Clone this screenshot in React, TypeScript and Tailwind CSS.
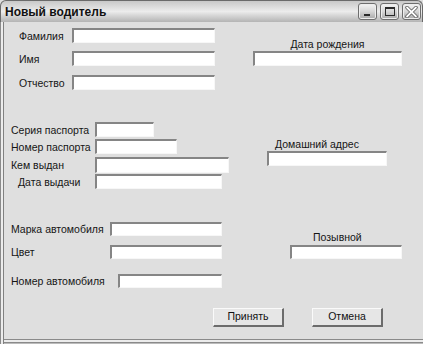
import React from "react";

const inputCls =
  "bg-white border-t-2 border-l-2 border-b border-r border-t-[#858585] border-l-[#858585] border-b-[#f7f7f7] border-r-[#f7f7f7] shrink-0";

function Row({
  label,
  labelW,
  pl,
  inputW,
  h = 15,
  mt = 0,
}: {
  label: string;
  labelW: number;
  pl: number;
  inputW: number;
  h?: number;
  mt?: number;
}) {
  return (
    <div className="flex items-center" style={{ marginTop: mt, height: h }}>
      <span className="whitespace-nowrap pt-[2px]" style={{ width: labelW, paddingLeft: pl }}>
        {label}
      </span>
      <div className={inputCls} style={{ width: inputW, height: h }} />
    </div>
  );
}

function TitleBtn({ children }: { children: React.ReactNode }) {
  return (
    <div className="w-[19px] h-[17px] rounded-[3px] border border-[#6e6e6e] bg-gradient-to-b from-[#f4f4f4] via-[#d6d6d6] to-[#a9a9a9] flex items-center justify-center shadow-[inset_0_0_0_1px_#ededed]">
      {children}
    </div>
  );
}

export default function App() {
  return (
    <div
      className="w-[423px] h-[344px] flex flex-col bg-[#dfdfdf] overflow-hidden text-[10.5px] text-[#151515]"
      style={{ fontFamily: "'Liberation Sans', Arial, sans-serif" }}
    >
      {/* Title bar */}
      <div className="h-[22px] shrink-0 flex items-center rounded-t-[6px] border border-b-0 border-[#6a6a6a] bg-gradient-to-b from-[#c8c8c8] via-[#ececec] to-[#b4b4b4] pl-[4px] pr-[1px]">
        <span className="font-bold text-[12px] text-[#111]">Новый водитель</span>
        <div className="ml-auto flex gap-[3px] items-center">
          <TitleBtn>
            <div className="w-[6px] h-[2px] bg-[#2a2a2a] mt-[7px] -ml-[2px]" />
          </TitleBtn>
          <TitleBtn>
            <div className="w-[10px] h-[9px] border border-t-2 border-[#2a2a2a]" />
          </TitleBtn>
          <TitleBtn>
            <svg width="13" height="12" viewBox="0 0 13 12">
              <path d="M2 1.5 L11 10.5 M11 1.5 L2 10.5" stroke="#5a5a5a" strokeWidth="3.4" strokeLinecap="round" />
              <path d="M2 1.5 L11 10.5 M11 1.5 L2 10.5" stroke="#ffffff" strokeWidth="1.8" strokeLinecap="round" />
            </svg>
          </TitleBtn>
        </div>
      </div>

      {/* Body */}
      <div className="flex-1 flex flex-col shadow-[inset_1px_0_0_#8a8a8a,inset_3px_0_0_#ececec,inset_4px_0_0_#808080,inset_0_-1px_0_#bbbbbb,inset_0_-2px_0_#8a8a8a,inset_0_-4px_0_#ececec,inset_0_-5px_0_#8a8a8a]">
        {/* Section 1 */}
        <div className="flex h-[78px] shrink-0">
          <div className="flex flex-col pt-[6px]">
            <Row label="Фамилия" labelW={72} pl={19} inputW={143} />
            <Row label="Имя" labelW={72} pl={19} inputW={143} mt={8} />
            <Row label="Отчество" labelW={72} pl={19} inputW={143} mt={9} />
          </div>
          <div className="ml-[38px] pt-[16px] w-[149px] flex flex-col">
            <div className="h-[13px] leading-[13px] text-center">Дата рождения</div>
            <div className={inputCls + " w-[149px] h-[15px]"} />
          </div>
        </div>

        {/* Section 2 */}
        <div className="flex h-[100px] shrink-0">
          <div className="flex flex-col pt-[22px] w-[229px]">
            <Row label="Серия паспорта" labelW={95} pl={11} inputW={59} />
            <Row label="Номер паспорта" labelW={95} pl={11} inputW={82} mt={2} />
            <Row label="Кем выдан" labelW={95} pl={11} inputW={134} mt={3} h={16} />
            <Row label="Дата выдачи" labelW={95} pl={18} inputW={127} mt={1} />
          </div>
          <div className="ml-[38px] pt-[37px] w-[120px] flex flex-col">
            <div className="h-[14px] leading-[14px] pl-[8px] whitespace-nowrap">Домашний адрес</div>
            <div className={inputCls + " w-[120px] h-[15px]"} />
          </div>
        </div>

        {/* Section 3 */}
        <div className="flex h-[95px] shrink-0">
          <div className="flex flex-col pt-[22px] w-[222px]">
            <Row label="Марка автомобиля" labelW={110} pl={11} inputW={112} h={14} />
            <Row label="Цвет" labelW={110} pl={11} inputW={112} h={14} mt={9} />
            <Row label="Номер автомобиля" labelW={118} pl={11} inputW={104} h={14} mt={15} />
          </div>
          <div className="ml-[68px] pt-[30px] w-[112px] flex flex-col">
            <div className="h-[15px] leading-[15px] pl-[23px]">Позывной</div>
            <div className={inputCls + " w-[112px] h-[14px]"} />
          </div>
        </div>

        {/* Buttons */}
        <div className="flex mt-[13px] pl-[213px] gap-[28px]">
          <button className="w-[71px] h-[19px] bg-[#e6e6e6] border border-t-[#fafafa] border-l-[#fafafa] border-b-2 border-r-2 border-b-[#6c6c6c] border-r-[#6c6c6c] flex items-center justify-center text-[10.5px] text-[#111]">
            Принять
          </button>
          <button className="w-[71px] h-[19px] bg-[#e6e6e6] border border-t-[#fafafa] border-l-[#fafafa] border-b-2 border-r-2 border-b-[#6c6c6c] border-r-[#6c6c6c] flex items-center justify-center text-[10.5px] text-[#111]">
            Отмена
          </button>
        </div>
      </div>
    </div>
  );
}
